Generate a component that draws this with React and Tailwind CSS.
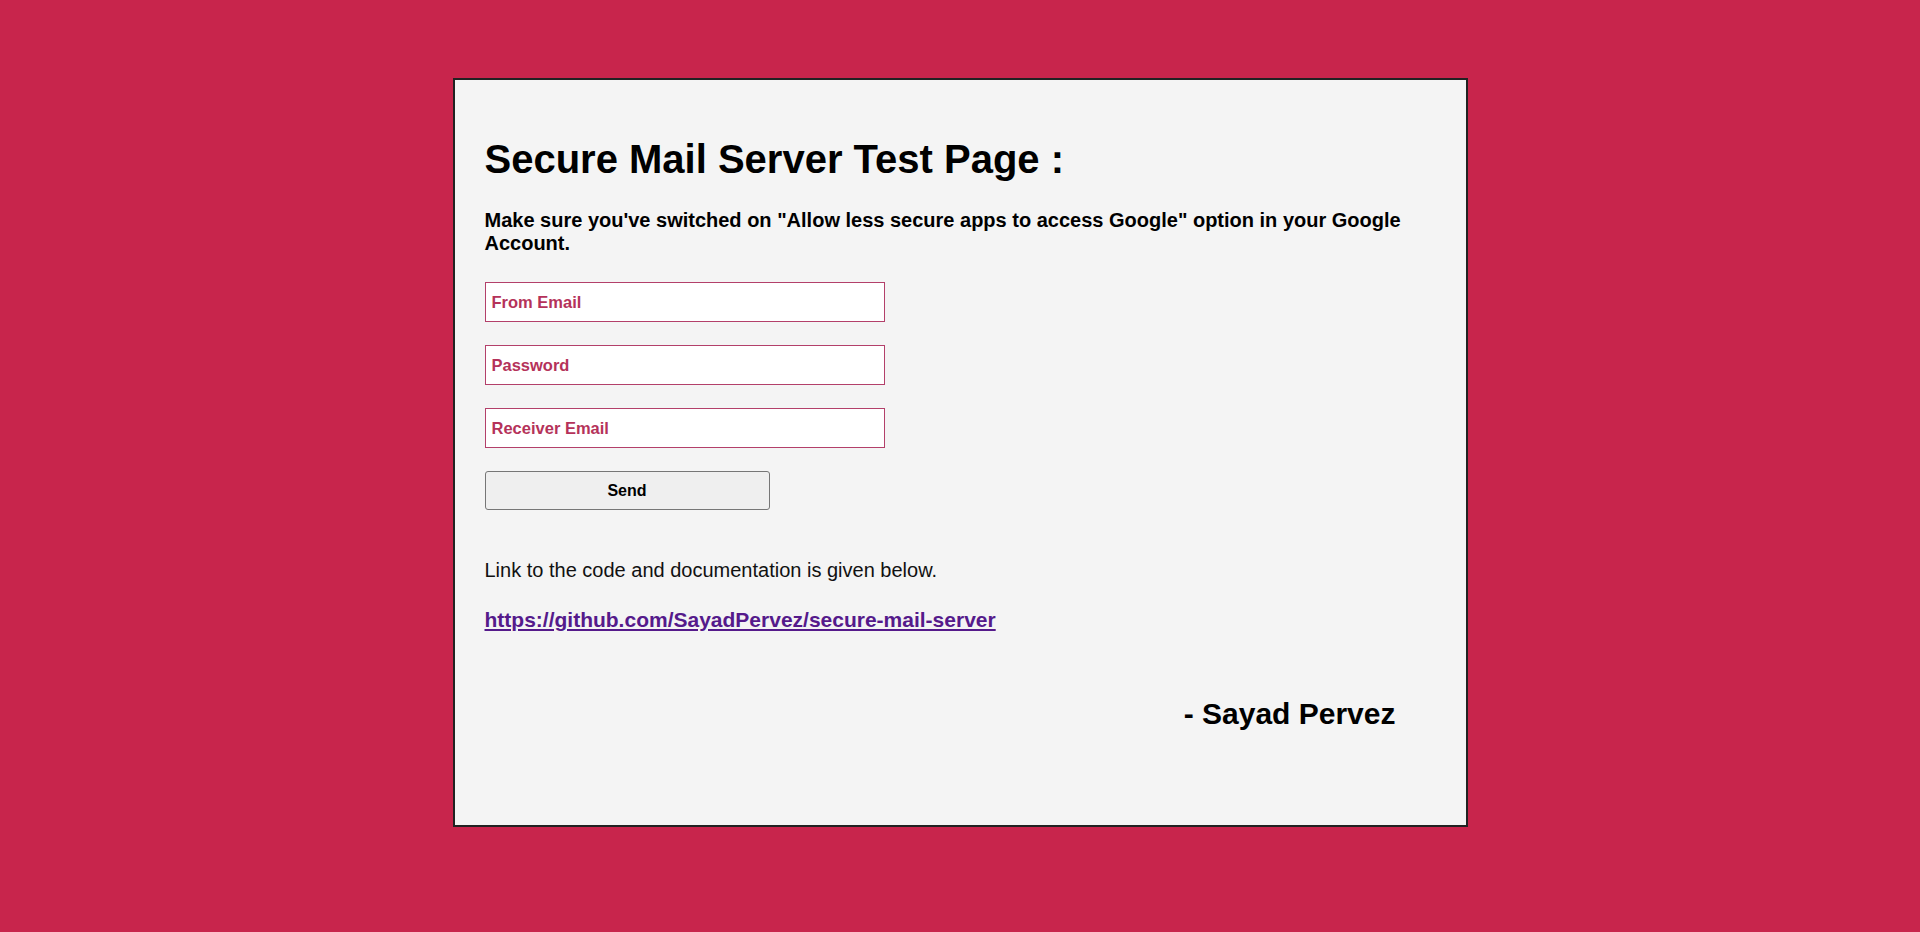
export default function App() {
  return (
    <div className="min-h-screen w-full bg-[#c8254c] pt-[78px] pb-[105px]" style={{ fontFamily: '"Liberation Sans", Arial, sans-serif' }}>
      <div className="mx-auto flex h-[749px] w-[1015px] flex-col border-2 border-[#222222] bg-[#f4f4f4] pl-[30px] pr-[30px] pt-[56px]">
        <h1 className="text-[40px] font-bold leading-[46px] text-black">Secure Mail Server Test Page :</h1>
        <p className="mt-[27px] text-[20px] font-bold leading-[23px] text-black">
          Make sure you've switched on "Allow less secure apps to access Google" option in your Google Account.
        </p>
        <form className="mt-[27px] flex flex-col gap-[23px]" onSubmit={(e) => e.preventDefault()}>
          <input
            type="email"
            placeholder="From Email"
            className="h-[40px] w-[400px] border border-[#b3406a] bg-white px-[6px] text-[16.5px] font-bold text-[#b5325a] outline-none placeholder:text-[#b5325a]"
          />
          <input
            type="password"
            placeholder="Password"
            className="h-[40px] w-[400px] border border-[#b3406a] bg-white px-[6px] text-[16.5px] font-bold text-[#b5325a] outline-none placeholder:text-[#b5325a]"
          />
          <input
            type="email"
            placeholder="Receiver Email"
            className="h-[40px] w-[400px] border border-[#b3406a] bg-white px-[6px] text-[16.5px] font-bold text-[#b5325a] outline-none placeholder:text-[#b5325a]"
          />
          <button
            type="submit"
            className="h-[39px] w-[285px] rounded-[3px] border border-[#767676] bg-[#efefef] text-[16px] font-bold text-black"
          >
            Send
          </button>
        </form>
        <p className="mt-[49px] text-[20px] leading-[23px] text-[#111111]">Link to the code and documentation is given below.</p>
        <a
          href="#"
          className="mt-[26px] self-start text-[21px] font-bold leading-[24px] text-[#551a8b] underline"
        >
          https://github.com/SayadPervez/secure-mail-server
        </a>
        <div className="mt-[65px] flex justify-end pr-[40px]">
          <h2 className="text-[30px] font-bold leading-[34px] text-black">- Sayad Pervez</h2>
        </div>
      </div>
    </div>
  );
}
